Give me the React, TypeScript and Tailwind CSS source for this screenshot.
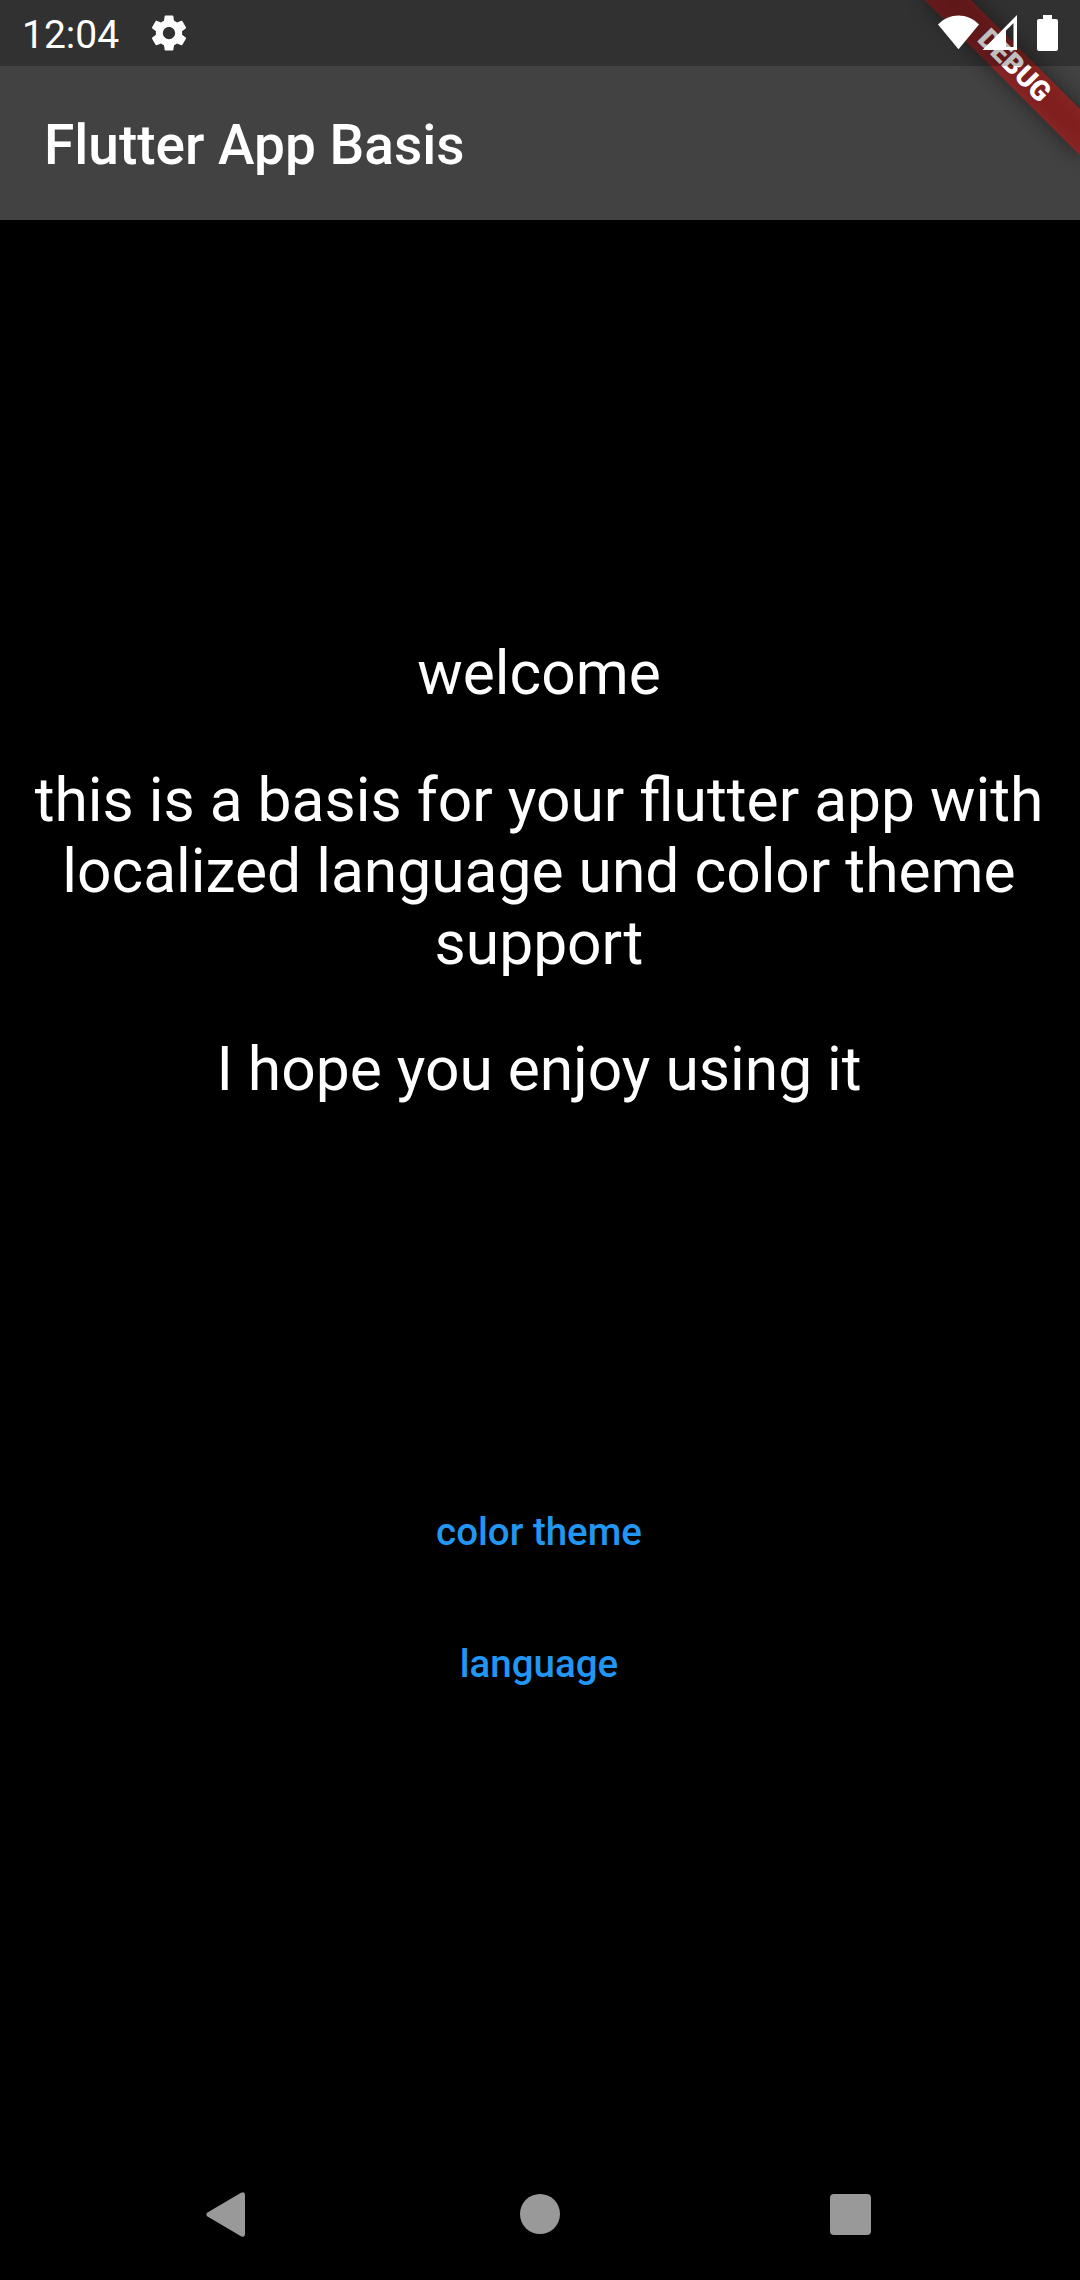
import type { ReactNode } from "react";

function StatusBar() {
  return (
    <div className="relative z-10 flex h-[66px] items-center bg-black/25 text-white">
      <span className="mt-[3px] ml-[22px] text-[39px] leading-[46px]">12:04</span>
      <svg className="ml-[28.5px] size-[42px]" viewBox="0 0 24 24" fill="currentColor">
        <path d="M19.43 12.98c.04-.32.07-.64.07-.98s-.03-.66-.07-.98l2.11-1.65c.19-.15.24-.42.12-.64l-2-3.46c-.12-.22-.39-.3-.61-.22l-2.49 1c-.52-.4-1.08-.73-1.69-.98l-.38-2.65C14.46 2.18 14.25 2 14 2h-4c-.25 0-.46.18-.49.42l-.38 2.65c-.61.25-1.17.59-1.69.98l-2.49-1c-.23-.09-.49 0-.61.22l-2 3.46c-.13.22-.07.49.12.64l2.11 1.65c-.04.32-.07.65-.07.98s.03.66.07.98l-2.11 1.65c-.19.15-.24.42-.12.64l2 3.46c.12.22.39.3.61.22l2.49-1c.52.4 1.08.73 1.69.98l.38 2.65c.03.24.24.42.49.42h4c.25 0 .46-.18.49-.42l.38-2.65c.61-.25 1.17-.59 1.69-.98l2.49 1c.23.09.49 0 .61-.22l2-3.46c.12-.22.07-.49-.12-.64l-2.11-1.65zM12 15.5c-1.93 0-3.5-1.57-3.5-3.5s1.57-3.5 3.5-3.5 3.5 1.57 3.5 3.5-1.57 3.5-3.5 3.5z" />
      </svg>
      <div className="mr-[22px] ml-auto flex h-9 items-center">
        <svg className="h-9 w-[42px]" viewBox="0 0 42 36" fill="currentColor">
          <path d="M1 9.500C12.500 -2.500 30.500 -2.500 42 9.500L21.500 34.300z" />
        </svg>
        <svg className="ml-[3px] h-9 w-[35px]" viewBox="0 0 35 36" fill="currentColor" fillRule="evenodd">
          <path d="M.5 35L35 0V35zM24 15.500V32H31.500V8z" />
        </svg>
        <svg className="ml-5 h-9 w-[21px]" viewBox="0 0 21 36" fill="currentColor">
          <path d="M6 0H15V4H19Q21 4 21 6V34Q21 36 19 36H2Q0 36 0 34V6Q0 4 2 4H6z" />
        </svg>
      </div>
    </div>
  );
}

function DebugBanner() {
  return (
    <div className="absolute top-0 left-full origin-top-left rotate-45">
      <div className="absolute top-[77px] left-[-110px] h-[33px] w-[220px] bg-black/50 blur-[10.9px]" />
      <div className="absolute top-[77px] left-[-110px] flex h-[33px] w-[220px] items-center justify-center bg-[#b71c1c]/63 pb-[2px] text-[28px] leading-none font-black text-white">
        DEBUG
      </div>
    </div>
  );
}

function TextButton({ children }: { children: ReactNode }) {
  return (
    <button className="flex h-[132px] items-center px-[22px] text-[38.5px] font-medium text-[#2196f3]">
      {children}
    </button>
  );
}

function NavigationBar() {
  return (
    <nav className="flex h-[132px] items-center justify-between pr-[209px] pl-[205px] text-[#999999]">
      <svg className="size-[45px]" viewBox="-1 0 45 45" fill="currentColor">
        <path d="M1.500 20.500L35 .8Q39 -1 39 3V42Q39 46 35 44.200L1.500 24.500Q-.8 22.500 1.500 20.500z" />
      </svg>
      <span className="size-10 rounded-full bg-[#999999]" />
      <span className="mt-px size-[41px] rounded-[4px] bg-[#999999]" />
    </nav>
  );
}

export default function App() {
  return (
    <div className="flex h-[2280px] w-[1080px] flex-col overflow-hidden bg-black font-[Roboto,sans-serif]">
      <header className="relative h-[220px] overflow-hidden bg-[#424242]">
        <StatusBar />
        <div className="flex h-[154px] items-center px-[44px] pt-[3px]">
          <h1 className="text-[55px] leading-[64px] font-medium text-white">Flutter App Basis</h1>
        </div>
        <DebugBanner />
      </header>
      <main className="flex flex-1 flex-col items-center pr-[2px]">
        <section className="mt-[418px] flex flex-col gap-[55px] px-[26px] text-center text-[60.5px] leading-[71.5px] text-white">
          <p>welcome</p>
          <p>this is a basis for your flutter app with localized language und color theme support</p>
          <p>I hope you enjoy using it</p>
        </section>
        <div className="mt-[360px] flex flex-col items-center">
          <TextButton>color theme</TextButton>
          <TextButton>language</TextButton>
        </div>
      </main>
      <NavigationBar />
    </div>
  );
}
